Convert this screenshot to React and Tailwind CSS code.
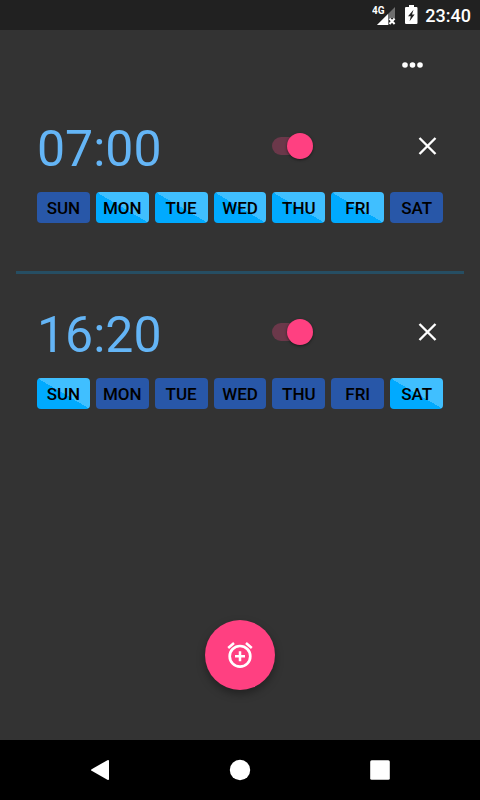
import { useState } from "react";

const DAYS = ["SUN", "MON", "TUE", "WED", "THU", "FRI", "SAT"];

const INITIAL_ALARMS = [
  { time: "07:00", enabled: true, days: ["MON", "TUE", "WED", "THU", "FRI"] },
  { time: "16:20", enabled: true, days: ["SUN", "SAT"] },
];

function StatusBar() {
  return (
    <div className="flex h-[30px] items-center justify-end bg-[#212121] pr-[9px] text-white">
      <svg className="h-[30px] w-6" viewBox="0 0 24 30" aria-label="4G signal">
        <path d="M23 7V18H17V25H5Z" fill="#6f6f6f" />
        <path d="M16 14V25H5Z" fill="#fff" />
        <path d="M17.5 18.5 22.6 24M22.6 18.5 17.5 24" stroke="#fff" strokeWidth="2" />
        <text x="0" y="14" fill="#fff" className="font-bold text-[10px]">4G</text>
      </svg>
      <svg className="ml-2 h-[30px] w-4" viewBox="0 0 16 30" aria-label="Battery charging">
        <path d="M5 5H10V7H12.4Q13.5 7 13.5 8V23Q13.5 24 12.4 24H2.1Q1 24 1 23V8Q1 7 2.1 7H5Z" fill="#fff" />
        <path d="M9.5 9.8 4 16.3H6.8L5.6 21.3 10.6 14.6H8Z" fill="#212121" />
      </svg>
      <span className="ml-[5px] pt-px text-lg font-medium">23:40</span>
    </div>
  );
}

function DayButton({ day, active, onClick }) {
  return (
    <button
      type="button"
      aria-pressed={active}
      onClick={onClick}
      className={`h-[31px] flex-1 rounded-[4px] pt-0.5 text-[17px] leading-[29px] font-medium text-black ${
        active
          ? "bg-[linear-gradient(to_top_right,#00aaff_50%,#40bfff_50%)]"
          : "bg-[#2857a8]"
      }`}
    >
      {day}
    </button>
  );
}

function Alarm({ alarm, onChange, onRemove }) {
  const toggleDay = (day) =>
    onChange({
      ...alarm,
      days: alarm.days.includes(day)
        ? alarm.days.filter((d) => d !== day)
        : [...alarm.days, day],
    });

  return (
    <li className="px-[37px] pt-7 pb-12">
      <div className="flex h-[60px] items-center">
        <time className="flex-1 pt-1.5 text-[50px] leading-[60px] text-[#64b5f6]">{alarm.time}</time>
        <input
          type="checkbox"
          role="switch"
          aria-label={`Alarm ${alarm.time}`}
          checked={alarm.enabled}
          onChange={(e) => onChange({ ...alarm, enabled: e.target.checked })}
          className="flex h-[18px] w-[41px] appearance-none items-center rounded-full bg-[#6b384a] before:size-[26px] before:shrink-0 before:rounded-full before:bg-[#bdbdbd] before:shadow-[0_1px_3px_rgba(0,0,0,0.5)] checked:justify-end checked:before:bg-[#ff4081]"
        />
        <button
          type="button"
          aria-label={`Delete alarm ${alarm.time}`}
          onClick={onRemove}
          className="ml-[99px] flex size-[31px] items-center justify-center"
        >
          <svg className="size-5" viewBox="0 0 20 20" stroke="#fff" strokeWidth="2.4">
            <path d="M1.5 2 17.5 18M17.5 2 1.5 18" />
          </svg>
        </button>
      </div>
      <div className="mt-4 flex gap-[6px]">
        {DAYS.map((day) => (
          <DayButton
            key={day}
            day={day}
            active={alarm.days.includes(day)}
            onClick={() => toggleDay(day)}
          />
        ))}
      </div>
    </li>
  );
}

function NavBar() {
  return (
    <nav className="flex h-[60px] items-center justify-center gap-[100px] bg-black">
      <button type="button" aria-label="Back" className="size-10">
        <svg viewBox="0 0 40 40" fill="#fff">
          <path d="M11.6 19.2 27.4 10.2Q29 9.5 29 11V29Q29 30.5 27.4 29.8L11.6 20.8Q10.4 20 11.6 19.2Z" />
        </svg>
      </button>
      <button type="button" aria-label="Home" className="size-10">
        <svg viewBox="0 0 40 40" fill="#fff">
          <circle cx="20" cy="20" r="10.2" />
        </svg>
      </button>
      <button type="button" aria-label="Recent apps" className="size-10">
        <svg viewBox="0 0 40 40" fill="#fff">
          <rect x="10.2" y="10.2" width="19.6" height="19.6" rx="1.5" />
        </svg>
      </button>
    </nav>
  );
}

export default function App() {
  const [alarms, setAlarms] = useState(INITIAL_ALARMS);

  const update = (index, next) => setAlarms(alarms.map((a, i) => (i === index ? next : a)));
  const remove = (index) => setAlarms(alarms.filter((_, i) => i !== index));
  const add = () => setAlarms([...alarms, { time: "08:00", enabled: true, days: [] }]);

  return (
    <div className="flex min-h-screen flex-col bg-[#333333] font-['Roboto',sans-serif]">
      <StatusBar />
      <header className="flex h-[58px] items-center justify-end pt-3 pr-[52px]">
        <button type="button" aria-label="More options" className="h-8 w-8">
          <svg viewBox="0 0 32 32" fill="#fff">
            <circle cx="9" cy="16" r="2.8" />
            <circle cx="16.5" cy="16" r="2.8" />
            <circle cx="24" cy="16" r="2.8" />
          </svg>
        </button>
      </header>
      <main className="flex flex-1 flex-col">
        <ul>
          {alarms.map((alarm, i) => (
            <div key={i} className="contents">
              {i > 0 && <li role="separator" className="mx-4 h-[3px] bg-[#264e63]" />}
              <Alarm alarm={alarm} onChange={(next) => update(i, next)} onRemove={() => remove(i)} />
            </div>
          ))}
        </ul>
        <div className="mt-auto flex justify-center pb-[50px]">
          <button
            type="button"
            aria-label="Add alarm"
            onClick={add}
            className="flex size-[70px] items-center justify-center rounded-full bg-[#ff4081] shadow-[0_4px_9px_rgba(0,0,0,0.35)]"
          >
            <svg className="size-[30px]" viewBox="0 0 30 30" fill="none" stroke="#fff">
              <circle cx="15" cy="16.3" r="10.3" strokeWidth="2.7" />
              <path d="M10 16.2H20M15 11.2V21.2" strokeWidth="2.5" />
              <path d="M3.2 7.9 9 3.1M26.8 7.9 21 3.1" strokeWidth="2.6" />
            </svg>
          </button>
        </div>
      </main>
      <NavBar />
    </div>
  );
}
